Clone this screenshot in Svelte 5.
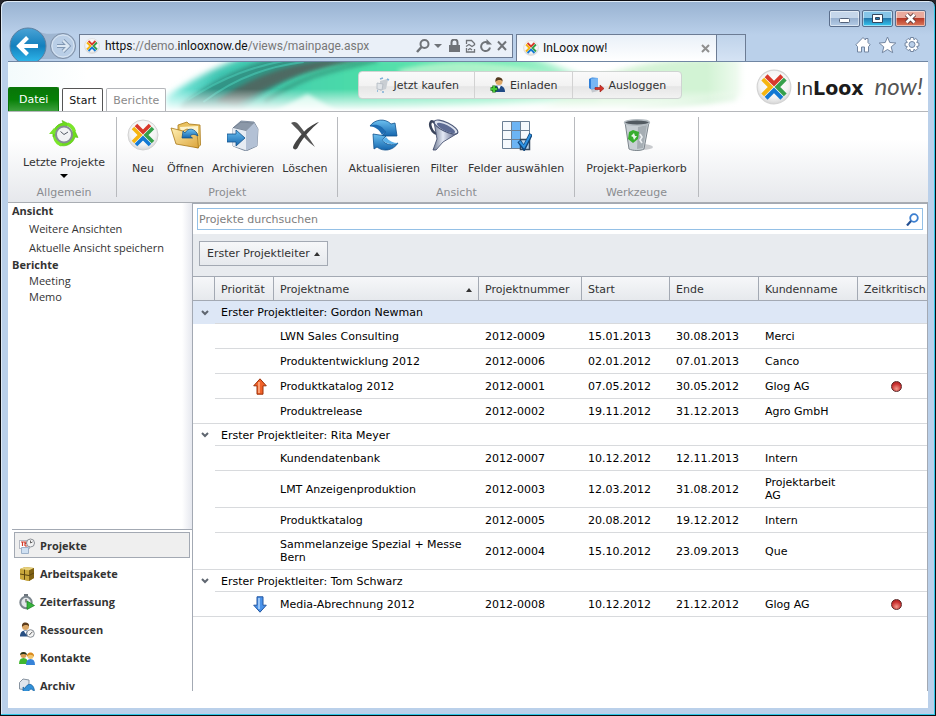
<script lang="ts">
	interface Project {
		name: string;
		number: string;
		start: string;
		end: string;
		customer: string;
		priority?: 'high' | 'low';
		critical?: boolean;
	}

	interface Group {
		manager: string;
		projects: Project[];
	}

	const groups: Group[] = [
		{
			manager: 'Gordon Newman',
			projects: [
				{ name: 'LWN Sales Consulting', number: '2012-0009', start: '15.01.2013', end: '30.08.2013', customer: 'Merci' },
				{ name: 'Produktentwicklung 2012', number: '2012-0006', start: '02.01.2012', end: '07.01.2013', customer: 'Canco' },
				{ name: 'Produktkatalog 2012', number: '2012-0001', start: '07.05.2012', end: '30.05.2012', customer: 'Glog AG', priority: 'high', critical: true },
				{ name: 'Produktrelease', number: '2012-0002', start: '19.11.2012', end: '31.12.2013', customer: 'Agro GmbH' }
			]
		},
		{
			manager: 'Rita Meyer',
			projects: [
				{ name: 'Kundendatenbank', number: '2012-0007', start: '10.12.2012', end: '12.11.2013', customer: 'Intern' },
				{ name: 'LMT Anzeigenproduktion', number: '2012-0003', start: '12.03.2012', end: '31.08.2012', customer: 'Projektarbeit AG' },
				{ name: 'Produktkatalog', number: '2012-0005', start: '20.08.2012', end: '19.12.2012', customer: 'Intern' },
				{ name: 'Sammelanzeige Spezial + Messe Bern', number: '2012-0004', start: '15.10.2012', end: '23.09.2013', customer: 'Que' }
			]
		},
		{
			manager: 'Tom Schwarz',
			projects: [
				{ name: 'Media-Abrechnung 2012', number: '2012-0008', start: '10.12.2012', end: '21.12.2012', customer: 'Glog AG', priority: 'low', critical: true }
			]
		}
	];

	const modules = ['Projekte', 'Arbeitspakete', 'Zeiterfassung', 'Ressourcen', 'Kontakte', 'Archiv'];

	let activeModule = $state('Projekte');
	let search = $state('');
	let collapsed = $state<string[]>([]);

	const toggleGroup = (manager: string) => {
		collapsed = collapsed.includes(manager)
			? collapsed.filter((m) => m !== manager)
			: [...collapsed, manager];
	};

	const matches = (p: Project) => p.name.toLowerCase().includes(search.toLowerCase());
</script>

{#snippet logo(size: number)}
	<svg width={size} height={size} viewBox="0 0 32 32" aria-hidden="true">
		<circle cx="16" cy="16" r="15" fill="url(#disc)" stroke="#d3d3d3" />
		<g fill="none" stroke-width="3.600">
			<path d="M9 6l7 7 7-7" stroke="#d8392b" />
			<path d="M6 9l7 7-7 7" stroke="#f6b50f" />
			<path d="M26 9l-7 7 7 7" stroke="#35a04b" />
			<path d="M9 26l7-7 7 7" stroke="#1379d4" />
		</g>
	</svg>
{/snippet}

{#snippet moduleIcon(name: string)}
	<svg width="16" height="16" viewBox="0 0 16 16" aria-hidden="true">
		{#if name === 'Projekte'}
			<rect x=".5" y="2.500" width="10" height="8" fill="#fff" stroke="#b5b9c2" />
			<path d="M2 4h7M3.500 4v4M6 5.500h2.500M6 8h2.500M6 4v4" stroke="#cf3b2b" stroke-width="1.200" />
			<path d="M2.500 9.500h7v6h-7z" fill="#cfe0f2" stroke="#9db1c9" />
			<circle cx="11.500" cy="5" r="4" fill="#f3f3f3" stroke="#8b8f96" />
			<path d="M11.500 5V2.500M11.500 5l2-1" stroke="#666" fill="none" />
		{:else if name === 'Arbeitspakete'}
			<path d="M1 3l5-2 9 1v10l-5 3-9-2z" fill="#b08a20" />
			<path d="M1 3l9 1.500V15l-9-2z" fill="#c9a83c" />
			<path d="M1 3l5-2 9 1-5 2.500z" fill="#e6d07c" />
			<path d="M10 4.500 15 2v10l-5 3z" fill="#806214" />
			<path d="M5.500 3.700v10M1 8l9 1.500L15 7" fill="none" stroke="#5c470f" />
		{:else if name === 'Zeiterfassung'}
			<rect x="5" y="0" width="4" height="2.500" fill="#6d757d" />
			<circle cx="7" cy="8.500" r="5.700" fill="#e3e7ea" stroke="#7b858d" stroke-width="2" />
			<path d="M7 8.500V5" stroke="#333" />
			<path d="M8 7l7.500 4.500L8 15.500z" fill="#37b53c" stroke="#157d1e" stroke-width=".7" />
		{:else if name === 'Ressourcen'}
			<path d="M1 14.500c0-4 2-6 5.500-6s4.500 2 4.500 6z" fill="#274f82" />
			<path d="M5 9l1.500 3L8 9z" fill="#fff" />
			<circle cx="6.500" cy="4.500" r="3.500" fill="#dba765" />
			<path d="M3 5C2.500 1 5 0 7 .5s3.500 1.500 3 4C8.500 2.500 5 2.500 3 5z" fill="#5c3c1c" />
			<circle cx="11.500" cy="11.500" r="3.800" fill="#f5f5f5" stroke="#878d94" />
			<path d="M11.500 11.500 13.500 10M11.500 11.500l-1 1.500" stroke="#555" />
		{:else if name === 'Kontakte'}
			<path d="M0 14c0-4 1.500-6 4.500-6S9 10 9 14z" fill="#41b72f" />
			<circle cx="4.500" cy="5" r="3" fill="#d89d55" />
			<path d="M1 5c0-4 7-4 7 0C6 3.500 3 3.500 1 5z" fill="#27351b" />
			<path d="M7 15c0-4 1.500-6 4.500-6s4.500 2 4.500 6z" fill="#3683d8" />
			<circle cx="11.500" cy="6" r="3" fill="#f1c66d" />
			<path d="M8 7c-1-6 8-6 7 0C13.500 4 9.500 4 8 7z" fill="#d98a1d" />
		{:else}
			<path d="M.5 4.500 4 1l6 1v3l-1 7-8.500-1z" fill="#dfe5ec" stroke="#8793a0" />
			<path d="M4 14.500V9l2 1.500C8.500 4 15.500 5 15.500 14.500c-2-4-4-4-5.500-2l1.500 2z" fill="#3190d8" stroke="#165c98" stroke-width=".7" />
		{/if}
	</svg>
{/snippet}

<svg class="defs" width="0" height="0" aria-hidden="true">
	<defs>
		<radialGradient id="disc" cx=".5" cy=".4" r=".6">
			<stop offset="0" stop-color="#fff" />
			<stop offset=".7" stop-color="#f4f4f4" />
			<stop offset="1" stop-color="#d6d6d6" />
		</radialGradient>
		<linearGradient id="blue" x1="0" y1="0" x2="0" y2="1">
			<stop offset="0" stop-color="#6cc0f0" />
			<stop offset="1" stop-color="#1566ae" />
		</linearGradient>
		<linearGradient id="steel" x1="0" y1="0" x2="1" y2="0">
			<stop offset="0" stop-color="#6f7a92" />
			<stop offset=".4" stop-color="#e4e9f5" />
			<stop offset="1" stop-color="#444f78" />
		</linearGradient>
		<linearGradient id="folder" x1="0" y1="0" x2="1" y2="1">
			<stop offset="0" stop-color="#fff0b4" />
			<stop offset="1" stop-color="#dca53c" />
		</linearGradient>
		<linearGradient id="back" x1="0" y1="0" x2="0" y2="1">
			<stop offset="0" stop-color="#4aa3d6" />
			<stop offset=".5" stop-color="#1480bd" />
			<stop offset="1" stop-color="#31bdf0" />
		</linearGradient>
	</defs>
</svg>

<div class="window">
	<div class="titlebar">
		<button class="min" aria-label="Minimieren">
			<svg width="29" height="15" viewBox="0 0 29 15"><rect x="9.500" y="7.500" width="10" height="4" rx="1" fill="#fff" stroke="#53627a" /></svg>
		</button>
		<button class="max" aria-label="Maximieren">
			<svg width="29" height="15" viewBox="0 0 29 15">
				<path d="M9.500 3.500h10v8h-10zM12.500 6.500h4v2h-4z" fill="#fff" stroke="#34475e" fill-rule="evenodd" />
			</svg>
		</button>
		<button class="close" aria-label="Schließen">
			<svg width="29" height="15" viewBox="0 0 29 15">
				<path d="M10.500 3.500l8 8M18.500 3.500l-8 8" stroke="#5b3a3a" stroke-width="4.500" />
				<path d="M10.500 3.500l8 8M18.500 3.500l-8 8" stroke="#fff" stroke-width="2.600" />
			</svg>
		</button>
	</div>

	<div class="navbar">
		<button class="history" aria-label="Zurück">
			<svg width="71" height="34" viewBox="0 0 71 34">
				<path d="M28 3c7 5 16 4 27 3a13 13 0 0 1 0 26H30z" fill="#9fb6d1" />
				<circle cx="55" cy="19" r="12.500" fill="#b9cee6" stroke="#7f8fa5" />
				<circle cx="55" cy="19" r="11" fill="none" stroke="#d9e5f2" />
				<path d="M49 19h11M55 13.500l5.500 5.500-5.500 5.500" fill="none" stroke="#8097b3" stroke-width="4" />
				<path d="M49 19h11M55 13.500l5.500 5.500-5.500 5.500" fill="none" stroke="#dbe7f3" stroke-width="2.200" />
				<circle cx="20" cy="19" r="18" fill="url(#back)" stroke="#5d7fa0" />
				<path d="M30 19H12M19.500 10.500 11 19l8.500 8.500" fill="none" stroke="#fff" stroke-width="4" />
			</svg>
		</button>
		<div class="address">
			{@render logo(16)}
			<div class="url"><b>https</b>://demo.<b>inlooxnow.de</b>/views/mainpage.aspx</div>
			<svg width="92" height="14" viewBox="0 0 92 14" fill="none" stroke="#6f7378" stroke-width="2" aria-hidden="true">
				<circle cx="8.500" cy="5" r="4" />
				<path d="M5.500 8 1 13" stroke-width="2.500" />
				<path d="M18 5h8l-4 4z" fill="#6f7378" stroke="none" />
				<path d="M33 6h11v7H33z" fill="#6f7378" stroke="none" />
				<path d="M35.500 6V3.500a3 3 0 0 1 6 0V6" />
				<path d="M50.500 5V1.500h5l3 3V6M50.500 9v4h8v-3" stroke-width="1.300" />
				<path d="M50 7.500l3-2 3 2 3-2M52 11l2-1.500 2 1.500" stroke-width="1.200" />
				<path d="M74 8.500A4.500 4.500 0 1 1 71.500 3.500" />
				<path d="M70.500 0v5.500H76z" fill="#6f7378" stroke="none" />
				<path d="M82 2.500l8 8.500M90 2.500l-8 8.500" />
			</svg>
		</div>
		<div class="tab">
			{@render logo(16)}
			<span>InLoox now!</span>
			<button aria-label="Tab schließen">
				<svg width="9" height="9" viewBox="0 0 9 9"><path d="M1 1l7 7M8 1 1 8" stroke="#8f8f8f" stroke-width="2" /></svg>
			</button>
		</div>
		<button class="new-tab" aria-label="Neuer Tab"></button>
		<div class="tools">
			<svg width="66" height="18" viewBox="0 0 66 18" fill="#fff" stroke="#7285a0" aria-hidden="true">
				<path d="M8 1.500.8 8.800 2.500 10.500V16H6.500v-5h3v5h4v-5.500l1.700-1.700L13 6.500v-4h-2.500v1.500z" />
				<path d="M32.500 1l2.300 5.500 6 .5-4.600 3.900 1.500 5.800-5.200-3.200-5.200 3.200 1.500-5.800L24.200 7l6-.5z" />
				<path fill-rule="evenodd" d="M55.500 1.500h3l.4 2.200 1.900-1.200 2.100 2-1.200 2 2.200.5v3l-2.200.5 1.200 1.900-2.100 2.100-1.900-1.200-.4 2.200h-3l-.4-2.200-2 1.200-2-2.100 1.200-1.900-2.200-.5V7l2.200-.5-1.200-2 2-2 2 1.200zM57 5.500a3 3 0 1 0 0 6 3 3 0 0 0 0-6z" />
			</svg>
		</div>
	</div>

	<div class="app">
		<header class="banner">
			<svg class="swoosh" viewBox="0 0 600 49" preserveAspectRatio="none" aria-hidden="true">
				<defs>
					<filter id="soft" x="-5%" y="-30%" width="110%" height="160%"><feGaussianBlur stdDeviation="3" /></filter>
					<filter id="softer" x="-5%" y="-30%" width="110%" height="160%"><feGaussianBlur stdDeviation="2" /></filter>
					<linearGradient id="wave" x1="0" y1="0" x2="1" y2="0">
						<stop offset="0" stop-color="#7feee2" />
						<stop offset=".12" stop-color="#3fc5b2" />
						<stop offset=".45" stop-color="#4cdca8" />
						<stop offset=".75" stop-color="#6eeab4" />
						<stop offset="1" stop-color="#cdf6dc" />
					</linearGradient>
					<linearGradient id="fade" x1="0" y1="0" x2="0" y2="1">
						<stop offset=".55" stop-color="#fff" stop-opacity="0" />
						<stop offset="1" stop-color="#fff" />
					</linearGradient>
					<linearGradient id="edge" x1="0" y1="0" x2="1" y2="0">
						<stop offset="0" stop-color="#fff" stop-opacity="0" />
						<stop offset="1" stop-color="#fff" />
					</linearGradient>
				</defs>
				<path d="M0 36C20 20 50 6 80-6H370C400 5 420 12 440 20V42C300 40 200 60 0 52z" fill="url(#wave)" filter="url(#soft)" />
				<path d="M16 42C45 20 75 4 110-4H205C150 2 110 20 76 50H14z" fill="#2f8478" opacity=".75" filter="url(#softer)" />
				<path d="M50 40C80 18 120 2 165-2H205C150 4 110 20 72 44z" fill="#545f5a" opacity=".8" filter="url(#softer)" />
				<path d="M22 38C60 14 90 4 125-2M38 40C70 16 105 4 140 0" fill="none" stroke="#49c9b6" stroke-width="2" opacity=".6" />
				<path d="M100 40C140 12 170 8 215-2" fill="none" stroke="#2a7b68" stroke-width="4" opacity=".6" filter="url(#softer)" />
				<path d="M110 50l34-18 34 20z" fill="#e6fff5" opacity=".8" filter="url(#softer)" />
				<path d="M235 8C300-8 360 2 420 20H250z" fill="#c9f7d3" opacity=".7" filter="url(#softer)" />
				<path d="M440 16C470 4 510-6 585-4V36L500 49H380z" fill="#c4efc6" opacity=".75" filter="url(#soft)" />
				<path d="M470 46C510 42 550 38 580 32v8C540 46 510 48 470 49z" fill="#a4e3ab" opacity=".7" filter="url(#softer)" />
				<rect width="600" height="49" fill="url(#fade)" />
				<rect x="550" width="50" height="49" fill="url(#edge)" />
			</svg>
			<nav class="tabs">
				<button class="file">Datei</button>
				<button class="current">Start</button>
				<button>Berichte</button>
			</nav>
			<div class="actions">
				<button>
					<svg width="16" height="16" viewBox="0 0 16 16" aria-hidden="true">
						<path d="M6 4l7-2 1 1-2 9-6 2z" fill="#c9ced3" />
						<path d="M3 6l6 1-1 6-5-1z" fill="#e0e4e8" stroke="#b0b8c0" stroke-width=".8" />
						<path d="M6 2l3-1M13 2l2 1M3 14h1M8 15h2" stroke="#7fb0d8" stroke-width="1.400" />
					</svg>
					Jetzt kaufen
				</button>
				<button>
					<svg width="16" height="16" viewBox="0 0 16 16" aria-hidden="true">
						<path d="M3 15c0-5 2-6.500 5.500-6.500S15 10 15 15z" fill="#1f4a86" />
						<path d="M7 8.500l2 4 2-4z" fill="#fff" />
						<circle cx="9" cy="4.500" r="3.500" fill="#dfa868" />
						<path d="M5.500 5C5 1 7 0 9 .3s4 1.500 3.500 4.200C11 2.500 7.500 2.500 5.500 5z" fill="#54391f" />
						<path d="M4 8.500v7M.5 12h7" stroke="#176e12" stroke-width="3.400" />
						<path d="M4 9v6M1 12h6" stroke="#45c936" stroke-width="2" />
					</svg>
					Einladen
				</button>
				<button>
					<svg width="16" height="16" viewBox="0 0 16 16" aria-hidden="true">
						<path d="M1 2l3-1.500 6 .5v11l-6 1-3-2z" fill="#2f7fd8" />
						<path d="M3 1.500l7-.5v10.500L3 12z" fill="#78b6f4" />
						<path d="M3 12.500l7-1V14l-6 1.500z" fill="#c5c9cf" />
						<path d="M7 10.500h5V8l4 3.500-4 3.500v-2.500H7z" fill="#d5332a" stroke="#971c14" stroke-width=".6" />
					</svg>
					Ausloggen
				</button>
			</div>
			<div class="brand">
				{@render logo(36)}
				<div class="wordmark"><span>In</span><b>Loox</b><i>now!</i></div>
			</div>
		</header>

		<div class="ribbon">
			<section class="recent">
				<div class="commands">
					<button>
						<svg width="32" height="32" viewBox="0 -1 32 32" aria-hidden="true">
							<path d="M5 17A12 12 0 0 1 15 3l-1-2.500 7 3.500-6 5V6.500A8 8 0 0 0 9 16zM11 25a12 12 0 0 0 16-8l3 .5L26.500 10 20 15.500h3A9 9 0 0 1 11 22z" fill="#6cdc1c" stroke="#54b80f" stroke-width=".6" />
							<path d="M1 14l5-6 5 6zM20 2.500A12 12 0 0 1 28 11l-3.500.5A9 9 0 0 0 19 6zM5 17c1 5 4 8 8 9.500l2-5C12 21 10 19 9 16z" fill="#7ae52a" />
							<circle cx="16" cy="14.500" r="8" fill="#f1f2f4" stroke="#868c95" stroke-width="2" />
							<path d="M12.500 11.500l3.500 3 4-2.500" fill="none" stroke="#555b66" />
						</svg>
						Letzte Projekte
						<span class="caret-down"></span>
					</button>
				</div>
				<h2>Allgemein</h2>
			</section>
			<section>
				<div class="commands">
					<button>
						{@render logo(32)}
						Neu
					</button>
					<button>
						<svg width="32" height="32" viewBox="0 0 32 32" aria-hidden="true">
							<path d="M8 6l9-3 2 2 11 1 .5 20-3 3L8 20z" fill="#e9c160" stroke="#a97818" stroke-width=".8" />
							<path d="M10 8l18-1v17l-16-3z" fill="#fdf3cc" />
							<path d="M1 9l12 3 4-2 10 4 1.500 15L6 25z" fill="url(#folder)" stroke="#a97818" stroke-width=".8" />
							<path d="M12 19l1-7 2 2c3-6 11-5 13 3-3-2-6-2-8 0l2.500 2z" fill="url(#blue)" stroke="#0f4d86" stroke-width=".7" />
						</svg>
						Öffnen
					</button>
					<button>
						<svg width="32" height="32" viewBox="0 0 32 32" aria-hidden="true">
							<path d="M6 9l8-7 13 1 4 7-1 17-11 5L6 27z" fill="#bfc9d6" stroke="#6a7a8f" stroke-width=".8" />
							<path d="M6 9l8-6 13 1-8 8z" fill="#8b98a8" stroke="#5f6d7d" stroke-width=".6" />
							<path d="M6 9l13 3v19L6 27z" fill="#e6ecf3" />
							<path d="M19 12l8-8 4 6-1 17-11 4z" fill="#b3c1d5" />
							<path d="M0 15h9v-4l9 8-9 8v-4H0z" fill="url(#blue)" stroke="#12518a" stroke-width=".8" />
						</svg>
						Archivieren
					</button>
					<button>
						<svg width="32" height="32" viewBox="0 0 32 32" aria-hidden="true">
							<path d="M2 4c3-2 6-1 8 2 5 6 10 13 16 22-7-5-13-12-17-17C6 8 4 6 2 4z" fill="#555" />
							<path d="M30 3C23 9 14 18 9 28c-1 3-4 3-5 1 0-3 4-8 8-13C18 9 24 5 30 3z" fill="#444" />
						</svg>
						Löschen
					</button>
				</div>
				<h2>Projekt</h2>
			</section>
			<section>
				<div class="commands">
					<button>
						<svg width="32" height="32" viewBox="0 0 32 32" aria-hidden="true">
							<path d="M2 7C7 0 17-1 23 5l4-1 2 13H14l4-4C14 8 8 6 2 7z" fill="url(#blue)" stroke="#10508c" stroke-width=".8" />
							<path d="M2 7c5-3 12-1 16 6l-4 3C11 10 7 8 2 7z" fill="#1e6cb2" />
							<path d="M30 24C25 32 15 33 9 28l-3 2-1-15 13 2-4 4c4 5 10 6 16 3z" fill="url(#blue)" stroke="#10508c" stroke-width=".8" />
							<path d="M30 24c-4 2-11 2-16-3l4-3c3 4 7 6 12 6z" fill="#5bb0e8" />
						</svg>
						Aktualisieren
					</button>
					<button>
						<svg width="32" height="32" viewBox="0 0 32 32" aria-hidden="true">
							<path d="M7 4C3 0 1 4 3 9s5 6 6 5" fill="none" stroke="#39435a" stroke-width="2.500" />
							<path d="M6 3L30 14 15 23 8 31H5l4-11z" fill="url(#steel)" stroke="#3a4566" stroke-width=".8" />
							<ellipse cx="18" cy="8" rx="13" ry="4.500" transform="rotate(26 18 8)" fill="#dce2ee" stroke="#4c5878" stroke-width="1.200" />
							<ellipse cx="18" cy="9" rx="10" ry="3" transform="rotate(26 18 9)" fill="#5d6b94" />
						</svg>
						Filter
					</button>
					<button>
						<svg width="32" height="32" viewBox="0 0 32 32" aria-hidden="true">
							<path d="M2.500 2.500h27v27h-27z" fill="#f5f9fd" />
							<path d="M11.500 2.500h9v27h-9z" fill="#6cb4f4" />
							<path d="M2.500 2.500h27v27h-27zM11.500 2.500v27M20.500 2.500v27M2.500 11.500h27M2.500 20.500h27" fill="none" stroke="#6b7f94" />
							<path d="M20.500 20.500h9v10h-9z" fill="#b9d3ea" stroke="#35495d" stroke-width="1.500" />
							<path d="M19 22l5 7 7-14" fill="none" stroke="#10477d" stroke-width="4" />
							<path d="M19.500 22.500l4.500 5.500 6.500-12.500" fill="none" stroke="#2f93e2" stroke-width="2" />
						</svg>
						Felder auswählen
					</button>
				</div>
				<h2>Ansicht</h2>
			</section>
			<section class="recycle">
				<div class="commands">
					<button>
						<svg width="32" height="32" viewBox="0 0 32 32" aria-hidden="true">
							<ellipse cx="21" cy="28" rx="11" ry="3" fill="#c9cbce" />
							<path d="M4 3l4 27c4 2 12 2 15 0l5-27z" fill="#c9d0d5" stroke="#7c858c" />
							<path d="M17 8l9-2-4 23-6 1z" fill="#8f989f" opacity=".6" />
							<ellipse cx="16" cy="3.500" rx="12.500" ry="2.700" fill="#525a61" stroke="#b3bbc1" stroke-width="1.400" />
							<path d="M12 11l6 2-1 7-5 4-5-4 1-7z" fill="#37ae2e" />
							<path d="M10 17l3-3 1 3h2l-3 4-1-3z" fill="#eaf5ea" />
							<path d="M19 15l2 3-2 3 2 3" stroke="#eef1f3" stroke-width="1.600" fill="none" />
						</svg>
						Projekt-Papierkorb
					</button>
				</div>
				<h2>Werkzeuge</h2>
			</section>
		</div>

		<div class="workspace">
			<aside>
				<div class="menu">
					<h3>Ansicht</h3>
					<ul class="views">
						<li><a href="#views">Weitere Ansichten</a></li>
						<li><a href="#save">Aktuelle Ansicht speichern</a></li>
					</ul>
					<h3>Berichte</h3>
					<ul>
						<li><a href="#meeting">Meeting</a></li>
						<li><a href="#memo">Memo</a></li>
					</ul>
				</div>
				<nav class="modules">
					{#each modules as name}
						<button class:active={activeModule === name} onclick={() => (activeModule = name)}>
							{@render moduleIcon(name)}
							{name}
						</button>
					{/each}
				</nav>
			</aside>

			<main>
				<label class="search">
					<input type="text" placeholder="Projekte durchsuchen" aria-label="Projekte durchsuchen" bind:value={search} />
					<svg width="13" height="13" viewBox="0 0 13 13" fill="none" aria-hidden="true">
						<circle cx="8" cy="5" r="3.800" stroke="#3c7fd0" stroke-width="1.800" />
						<path d="M5 8 1 12.500" stroke="#234f92" stroke-width="2.200" />
					</svg>
				</label>
				<div class="grouping">
					<button>Erster Projektleiter <span class="sort"></span></button>
				</div>
				<table>
					<colgroup>
						<col class="c-toggle" />
						<col class="c-priority" />
						<col />
						<col class="c-number" />
						<col class="c-start" />
						<col class="c-end" />
						<col class="c-customer" />
						<col class="c-critical" />
					</colgroup>
					<thead>
						<tr>
							<th aria-label="Gruppe"></th>
							<th>Priorität</th>
							<th><div class="sorted">Projektname <span class="sort"></span></div></th>
							<th>Projektnummer</th>
							<th>Start</th>
							<th>Ende</th>
							<th>Kundenname</th>
							<th>Zeitkritisch</th>
						</tr>
					</thead>
					{#each groups as group, i}
						<tbody>
							<tr class="group" class:selected={i === 0}>
								<td class="toggle">
									<button aria-label="Gruppe umschalten" onclick={() => toggleGroup(group.manager)}>
										<svg width="8" height="6" viewBox="0 0 8 6" fill="none"><path d="M1 1l3 3 3-3" stroke="#5f6670" stroke-width="2" /></svg>
									</button>
								</td>
								<td colspan="7">Erster Projektleiter: {group.manager}</td>
							</tr>
							{#if !collapsed.includes(group.manager)}
								{#each group.projects.filter(matches) as project}
									<tr>
										<td></td>
										<td class="priority">
											{#if project.priority === 'high'}
												<svg width="14" height="17" viewBox="0 0 14 17"><path d="M7 .8l6.300 7H10v8.400H4V7.800H.7z" fill="#f0622a" stroke="#9c3109" /><path d="M6 4v11" stroke="#ffb48c" stroke-width="1.500" /></svg>
											{:else if project.priority === 'low'}
												<svg width="14" height="17" viewBox="0 0 14 17"><path d="M7 16.200l6.300-7H10V.8H4v8.400H.7z" fill="#4a93ea" stroke="#2456a0" /><path d="M6 2v11" stroke="#b4d6fb" stroke-width="1.500" /></svg>
											{/if}
										</td>
										<td>{project.name}</td>
										<td>{project.number}</td>
										<td>{project.start}</td>
										<td>{project.end}</td>
										<td>{project.customer}</td>
										<td class="critical">
											{#if project.critical}<span class="dot"></span>{/if}
										</td>
									</tr>
								{/each}
							{/if}
						</tbody>
					{/each}
				</table>
			</main>
		</div>
	</div>
</div>

<style>
	:global(body) {
		background: #26262c;
	}

	.window {
		box-sizing: border-box;
		display: flex;
		flex-direction: column;
		min-height: 100vh;
		padding: 0 7px 7px;
		border: 1px solid #0c0c10;
		border-radius: 7px 7px 0 0;
		background: linear-gradient(#98b2d1, #bad0ea 34px);
		box-shadow: inset -1px -1px #2fc6e6, inset 1px 1px #dfeaf5;
		font: 11px/13px 'DejaVu Sans', Verdana, sans-serif;
		color: #333;
	}

	.defs {
		position: absolute;
	}

	svg {
		display: block;
		flex: none;
	}

	button {
		margin: 0;
		padding: 0;
		border: 0;
		background: none;
		font: inherit;
		color: inherit;
	}

	h2,
	h3,
	ul {
		margin: 0;
		padding: 0;
		list-style: none;
		font: inherit;
	}

	.titlebar {
		display: flex;
		justify-content: flex-end;
		align-items: flex-end;
		gap: 2px;
		height: 26px;
		padding-right: 2px;
	}

	.titlebar button {
		border: 1px solid #5a6e8c;
		border-radius: 2px;
		box-shadow: inset 0 0 0 1px rgba(255, 255, 255, 0.5);
	}

	.titlebar .min {
		background: linear-gradient(#c5d6ea 50%, #98b1d0 50%, #b5cce6);
	}

	.titlebar .max {
		background: linear-gradient(#86c5e8 50%, #2479ae 50%, #35c8f2);
	}

	.titlebar .close {
		background: linear-gradient(#e9aa9d 50%, #b83a28 50%, #dc7a5c);
	}

	.navbar {
		display: flex;
		align-items: flex-end;
		height: 34px;
	}

	.address {
		box-sizing: border-box;
		flex: 1;
		display: flex;
		align-items: center;
		height: 24px;
		margin: 0 3px 3px 0;
		padding: 0 4px;
		gap: 5px;
		border: 1px solid #6c7c94;
		background: #eaf0f8;
	}

	.url {
		flex: 1;
		overflow: hidden;
		white-space: nowrap;
		font: 12px/16px Roboto, 'Segoe UI', sans-serif;
		color: #777;
	}

	.url b {
		font-weight: 400;
		color: #111;
	}

	.tab {
		box-sizing: border-box;
		display: flex;
		align-items: center;
		gap: 4px;
		width: 201px;
		height: 27px;
		padding: 0 6px;
		border: 1px solid #6c7c94;
		border-bottom: 0;
		background: linear-gradient(#e9f0f8, #fff);
		font: 12px/16px Roboto, 'Segoe UI', sans-serif;
		color: #111;
	}

	.tab span {
		flex: 1;
	}

	.new-tab {
		box-sizing: border-box;
		width: 29px;
		height: 27px;
		border: 1px solid #6c7c94;
		border-width: 1px 1px 0 0;
		background: linear-gradient(#bfd3ea, #d5e3f4);
	}

	.tools {
		display: flex;
		justify-content: flex-end;
		align-items: center;
		width: 175px;
		height: 32px;
		padding-right: 7px;
	}

	.app {
		flex: 1;
		display: flex;
		flex-direction: column;
		border-top: 1px solid #7086a3;
		background: #fff;
	}

	.banner {
		position: relative;
		display: flex;
		align-items: flex-end;
		height: 49px;
		background: linear-gradient(90deg, #f3fbfc, #fff 80px);
	}

	.swoosh {
		position: absolute;
		left: 158px;
		top: 0;
		width: 590px;
		height: 49px;
	}

	.tabs,
	.actions,
	.brand {
		position: relative;
		display: flex;
	}

	.tabs {
		gap: 3px;
		align-items: flex-end;
	}

	.tabs button {
		height: 23px;
		padding: 0 6px;
		border: 1px solid #b4b6ba;
		border-bottom: 0;
		border-radius: 2px 2px 0 0;
		background: #fff;
		color: #8a8a8a;
	}

	.tabs .file {
		height: 24px;
		padding: 0 10px;
		border-color: #0a760a;
		background: linear-gradient(#087508, #078007 50%, #3da03d);
		color: #fff;
	}

	.tabs .current {
		border-color: #555;
		color: #111;
	}

	.actions {
		align-self: center;
		margin: 0 74px 3px auto;
		border: 1px solid #cfd4d2;
		border-radius: 4px;
		background: linear-gradient(#fafafa, #f2f2f2 55%, #e6e6e6 56%, #f2f2f2);
	}

	.actions button {
		display: flex;
		align-items: center;
		gap: 4px;
		height: 26px;
		padding: 0 15px;
	}

	.actions button + button {
		border-left: 1px solid #d2d2d2;
	}

	.brand {
		align-self: center;
		align-items: center;
		gap: 4px;
		padding-right: 5px;
	}

	.wordmark {
		display: flex;
		align-items: baseline;
		font: 19px/24px 'Open Sans', sans-serif;
		color: #2b2b2b;
		white-space: nowrap;
	}

	.wordmark b {
		margin-right: 11px;
		font: bold 19px/24px 'DejaVu Sans', sans-serif;
		color: #1c1c1c;
	}

	.wordmark i {
		font: italic 24px/24px Lato, sans-serif;
		color: #555;
	}

	.ribbon {
		display: flex;
		height: 90px;
		border-top: 1px solid #b5b7bb;
		border-bottom: 1px solid #a9adb3;
		background: linear-gradient(#fff 30%, #e6e8ec);
	}

	.ribbon section {
		display: flex;
		flex-direction: column;
		justify-content: space-between;
		margin: 5px 0;
		padding: 0 10px;
		border-right: 1px solid #b8babe;
		text-align: center;
	}

	.ribbon .recent {
		padding: 0 11px 0 15px;
	}

	.ribbon .recycle {
		padding: 0 11px;
	}

	.commands {
		display: flex;
		justify-content: center;
		gap: 8px;
		padding-top: 2px;
	}

	.commands button {
		display: flex;
		flex-direction: column;
		align-items: center;
		gap: 11px;
		min-width: 32px;
		white-space: nowrap;
	}

	.commands .caret-down {
		border: 4px solid transparent;
		border-top-color: #000;
		border-bottom: 0;
	}

	.recent .commands button {
		gap: 5px;
	}

	.ribbon h2 {
		line-height: 9px;
		color: #8a8c90;
	}

	.workspace {
		flex: 1;
		display: flex;
		margin-bottom: 17px;
	}

	aside {
		box-sizing: border-box;
		display: flex;
		flex-direction: column;
		width: 184px;
		padding-left: 4px;
		font: 11px/16px 'Open Sans', 'Segoe UI', sans-serif;
	}

	.menu {
		flex: 1;
		background: linear-gradient(90deg, transparent 170px, #e6e8ef);
	}

	.menu h3 {
		font-weight: 700;
	}

	.menu ul {
		padding-left: 17px;
	}

	.menu .views {
		line-height: 19px;
	}

	.menu a {
		color: #333;
		text-decoration: none;
	}

	.modules {
		box-sizing: border-box;
		display: flex;
		flex-direction: column;
		gap: 2px;
		height: 162px;
		padding: 2px;
		overflow: hidden;
		border-top: 1px solid #a3a9b3;
	}

	.modules button {
		box-sizing: border-box;
		flex: none;
		display: flex;
		align-items: center;
		gap: 5px;
		height: 26px;
		padding: 1px 4px 0;
		border: 1px solid transparent;
		font-weight: 700;
	}

	.modules .active {
		border-color: #a3a9b3;
		background: #efefef;
	}

	main {
		flex: 1;
		min-width: 0;
		border: 1px solid #a3a9b3;
		border-bottom: 0;
	}

	.search {
		display: flex;
		align-items: center;
		height: 20px;
		margin: 4px;
		padding-right: 3px;
		border: 1px solid #94c0e6;
	}

	.search input {
		flex: 1;
		min-width: 0;
		padding: 0 1px;
		border: 0;
		outline: 0;
		font: inherit;
	}

	.search input::placeholder {
		color: #7d7d7d;
		opacity: 1;
	}

	.grouping {
		padding: 7px 6px 10px;
		background: #e8ebef;
	}

	.grouping button {
		display: flex;
		align-items: center;
		gap: 4px;
		height: 25px;
		padding: 0 7px;
		border: 1px solid #a3a9b3;
		background: linear-gradient(#f6f7f9, #e6e9ed);
	}

	.sort {
		border: 3px solid transparent;
		border-top: 0;
		border-bottom: 4px solid #333;
	}

	table {
		width: 100%;
		table-layout: fixed;
		border-collapse: separate;
		border-spacing: 0;
		color: #000;
	}

	.c-toggle {
		width: 22px;
	}

	.c-priority {
		width: 59px;
	}

	.c-number {
		width: 103px;
	}

	.c-start {
		width: 88px;
	}

	.c-end {
		width: 89px;
	}

	.c-customer {
		width: 99px;
	}

	.c-critical {
		width: 69px;
	}

	th,
	td {
		box-sizing: border-box;
		text-align: left;
	}

	th {
		height: 25px;
		padding: 2px 6px 0;
		border: 1px solid #a3a9b3;
		border-left: 0;
		background: linear-gradient(#f6f7f9, #e6e9ed);
		font-weight: 400;
		color: #333;
		white-space: nowrap;
	}

	th:last-child {
		border-right: 0;
	}

	.sorted {
		display: flex;
		align-items: center;
		justify-content: space-between;
	}

	td {
		height: 25px;
		padding: 5px 6px;
		border-bottom: 1px solid #d8dadd;
	}

	td:first-child {
		border-bottom-color: transparent;
	}

	tr:last-child td {
		border-bottom-color: #d8dadd;
	}

	.group td {
		height: 22px;
		padding: 4px 6px 3px;
	}

	.selected td {
		height: 23px;
		background: #dde7f6;
	}

	.group .toggle {
		padding: 0 0 0 8px;
	}

	.priority svg {
		margin: 0 0 0 auto;
	}

	td.priority {
		padding: 0 7px 0 0;
	}

	td.critical {
		padding: 0 2px 0 10px;
	}

	.dot {
		display: block;
		box-sizing: border-box;
		width: 11px;
		height: 11px;
		margin: 0 auto;
		border: 1px solid #5c2626;
		border-radius: 50%;
		background: radial-gradient(circle at 50% 75%, #f29a8c, #c92f2f 60%, #a11f1f);
	}
</style>
